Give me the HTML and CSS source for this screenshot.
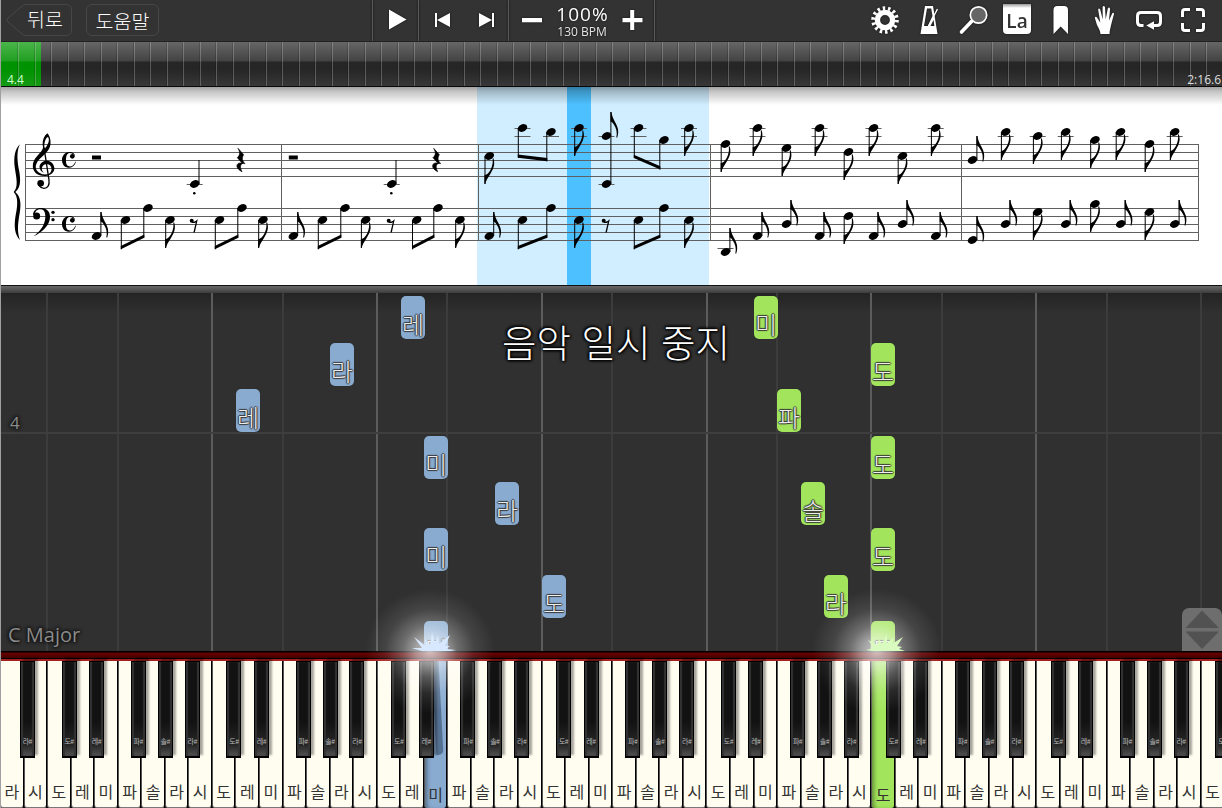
FILE: index.html
```html
<!DOCTYPE html>
<html lang="ko">
<head>
<meta charset="UTF-8">
<meta name="viewport" content="width=device-width, initial-scale=1.0">
<title>Piano</title>
<link rel="stylesheet" href="styles.css">
</head>
<body>
<div class="app">
  <!-- Toolbar -->
  <header class="toolbar">
    <div class="nav">
      <button class="back">
        <svg class="back-shape" width="66" height="32" viewBox="0 0 66 32"><path d="M20 .5H60Q65.500 .5 65.500 6V26Q65.500 31.500 60 31.500H20Q17 31.500 15 29L2 18Q0 16 2 14L15 3Q17 .5 20 .5Z"/></svg>
        <span>뒤로</span>
      </button>
      <button class="help">도움말</button>
    </div>
    <div class="transport">
      <button class="play"><svg width="46" height="41"><path d="M16 9.500L33.500 19.500L16 29.500Z"/></svg></button>
      <div class="skip">
        <button><svg width="45" height="41"><path d="M16 13H18V27H16ZM31 13V27L18 20Z"/></svg></button>
        <button><svg width="44" height="41"><path d="M15 13L28 20L15 27ZM28 13H30V27H28Z"/></svg></button>
      </div>
      <div class="tempo">
        <button><svg width="46" height="41"><path d="M13 18H33V22.300H13Z"/></svg></button>
        <div class="speed"><span class="percent">100%</span><span class="bpm">130 BPM</span></div>
        <button><svg width="45" height="41"><path d="M21.200 10H25.200V18H33.500V22.200H25.200V30H21.200V22.200H13.500V18H21.200Z"/></svg></button>
      </div>
    </div>
    <div class="tools">
      <button><svg width="44" height="41" viewBox="0 0 44 41"><circle cx="22" cy="20" r="7.600" fill="none" stroke="#fff" stroke-width="5.400"/><circle cx="22" cy="20" r="11.800" fill="none" stroke="#fff" stroke-width="4" stroke-dasharray="2.500 2.796"/></svg></button>
      <button><svg width="44" height="41" viewBox="0 0 44 41"><path fill-rule="evenodd" d="M18 6H26L30.500 34H13.500ZM20 8.500L17 26H21L25.500 16L24.200 8.500ZM26.500 20L23.500 26H27.400Z"/><path d="M21.500 26L30.500 9" fill="none" stroke="#fff" stroke-width="1.400"/></svg></button>
      <button><svg width="44" height="41" viewBox="0 0 44 41"><path d="M20.500 21.500L10.500 32" stroke="#fff" stroke-width="3.600" stroke-linecap="round"/><circle cx="27.500" cy="15" r="8.200" fill="#666" stroke="#fff" stroke-width="1.700"/></svg></button>
      <button><span class="la">La</span></button>
      <button><svg width="44" height="41" viewBox="0 0 44 41"><path d="M14.500 34V10Q14.500 6 18.500 6H25Q29 6 29 10V34L21.700 26.500Z"/></svg></button>
      <button><svg width="44" height="41" viewBox="0 0 44 41"><path d="M17.500 34C17 29 14.500 27 13.500 23.500L11.800 17.800Q12.500 15.800 14 17.500L17.300 22.500L15.200 10Q15.500 7.500 17.200 9.500L19.700 19.500L19.600 7Q20.700 5 22 7L22.700 19.300L24.800 8.500Q26.200 6.500 27.100 8.700L26 20.500L29.300 13.200Q31 12 31 14L28.200 24.500C27.500 28 26.600 30.500 26.500 34Z"/></svg></button>
      <button><svg width="44" height="41" viewBox="0 0 44 41"><path d="M16.500 25.500H14Q10.500 25.500 10.500 22V16Q10.500 12.500 14 12.500H30Q33.500 12.500 33.500 16V22Q33.500 25.500 30 25.500H27" fill="none" stroke="#fff" stroke-width="3"/><path d="M19.300 25.500L27 21.300V29.700Z"/></svg></button>
      <button><svg width="44" height="41" viewBox="0 0 44 41"><path d="M11.500 17V12Q11.500 9.500 14 9.500H19M25 9.500H30Q32.500 9.500 32.500 12V17M32.500 23V28Q32.500 30.500 30 30.500H25M19 30.500H14Q11.500 30.500 11.500 28V23" fill="none" stroke="#fff" stroke-width="3"/></svg></button>
    </div>
  </header>

  <!-- Song position -->
  <div class="timeline">
    <div class="played"></div>
    <div class="bars" id="bars"></div>
    <span class="elapsed">4.4</span>
    <span class="duration">2:16.6</span>
  </div>

  <!-- Sheet music -->
  <div class="sheet">
    <svg id="score" width="1221" height="198" viewBox="1 87 1221 198"></svg>
  </div>
  <div class="splitter"></div>

  <!-- Falling notes -->
  <main class="roll" id="roll">
    <div class="bar-line"></div>
    <span class="bar-number">4</span>
    <span class="key-name">C Major</span>
    <div class="message">음악 일시 중지</div>
    <div class="scroller">
      <svg width="40" height="43"><path d="M20 2.500L37 20H3.500Z"/><path d="M3.500 23.500H37L20 41Z"/></svg>
    </div>
  </main>
  <div class="felt"></div>

  <!-- Keyboard -->
  <div class="keyboard" id="keyboard"></div>

  <div class="glow glow-left"></div>
  <div class="glow glow-right"></div>
  <svg class="spark spark-left" width="52" height="20" viewBox="0 0 52 20"><path d="M13 20L3 17L13 17L5 6L17 15L16 8L21 14L23 1L26 12L29 4L30 13L41 4L36 15L41 15L37 18L47 19L42 20Z"/></svg>
  <svg class="spark spark-right" width="52" height="20" viewBox="0 0 52 20"><path d="M13 20L6 19L14 17L8 9L17 14L19 8L22 13L27 2L27 12L34 6L32 13L43 6L37 15L42 16L39 18L45 20Z"/></svg>
</div>
<script src="script.js"></script>
</body>
</html>
```
FILE: styles.css
```css
* {
  box-sizing: border-box;
}
body {
  margin: 0;
  background: #333;
  font-family: "Open Sans", "Noto Sans CJK KR", sans-serif;
  overflow: hidden;
}
button {
  padding: 0;
  border: 0;
  background: none;
  color: #fff;
  font: inherit;
}
svg {
  display: block;
}
.app {
  position: relative;
  width: 1222px;
  height: 808px;
  display: flex;
  flex-direction: column;
  overflow: hidden;
  border-left: 1px solid #a0a0a0;
}

/* toolbar */
.toolbar {
  height: 42px;
  margin-left: -1px;
  display: flex;
  background: #333;
  border-bottom: 1px solid #222;
  fill: #fff;
}
.nav {
  width: 372px;
  display: flex;
  gap: 14px;
  padding: 4px 0 0 6px;
  font-family: "Noto Sans CJK KR", sans-serif;
  font-weight: 300;
  font-size: 19.500px;
}
.back, .help {
  height: 32px;
  line-height: 29px;
}
.back {
  width: 66px;
  display: grid;
}
.back > * {
  grid-area: 1 / 1;
}
.back span {
  padding-left: 12px;
}
.back-shape path {
  fill: none;
  stroke: #474747;
}
.help {
  width: 73px;
  border: 1px solid #474747;
  border-radius: 6px;
}
.transport, .skip, .tempo, .tools {
  display: flex;
}
.transport > * {
  border-left: 1px solid #585858;
}
.transport {
  width: 283px;
  border-right: 1px solid #585858;
  filter: drop-shadow(0 0 1px #111);
}
.play {
  width: 46px;
}
.skip {
  width: 90px;
}
.speed {
  width: 54px;
  display: flex;
  flex-direction: column;
  align-items: center;
  color: #fff;
  padding-top: 2px;
}
.percent {
  font-size: 19px;
  line-height: 25px;
  letter-spacing: 1px;
  margin-right: -1px;
}
.bpm {
  font-size: 12px;
  line-height: 10px;
  white-space: nowrap;
  color: #e4e4e4;
}
.tools {
  margin-left: 208px;
  filter: drop-shadow(0 0 1px #111);
}
.tools button {
  width: 44px;
  display: flex;
  justify-content: center;
}
.la {
  width: 28px;
  height: 30px;
  margin-top: 4px;
  padding-top: 4px;
  border-radius: 0 0 4px 4px;
  background: linear-gradient(#999, #fff 4px);
  color: #333;
  font-weight: 600;
  font-size: 19px;
  line-height: 26px;
}

/* timeline */
.timeline {
  position: relative;
  height: 45px;
  border-bottom: 1px solid #080808;
  background: linear-gradient(#666, #434343 19px, #262626 20px, #262626 28px, #383838 44px);
  color: #ddd;
  font-size: 12px;
  overflow: hidden;
}
.played {
  position: absolute;
  inset: 0 auto 0 0;
  width: 40px;
  background: linear-gradient(#4ab54a, #219f21 19px, #009200 20px, #009200 28px, #149a14 44px);
}
.bars {
  position: relative;
  display: flex;
  height: 44px;
  padding-left: 1.800px;
}
.bar {
  flex: none;
  width: 16.515px;
  border-right: 1px solid rgba(200, 200, 200, .32);
  box-shadow: inset -1px 0 rgba(0, 0, 0, .15);
}
.elapsed, .duration {
  position: absolute;
  bottom: -2px;
}
.elapsed {
  left: 6px;
  color: #cfc;
}
.duration {
  right: 1px;
}

/* sheet */
.sheet {
  position: relative;
  height: 198px;
  background: #fff;
}
.sheet::after {
  content: "";
  position: absolute;
  inset: 0 0 auto 0;
  height: 18px;
  background: linear-gradient(rgba(0, 0, 0, .36), rgba(0, 0, 0, .22) 5px, transparent);
}
.measure-now {
  fill: #d0eeff;
}
.beat-now {
  fill: #4dc1ff;
}
.staff {
  stroke: #606060;
}
.stem {
  stroke: #000;
}
.splitter {
  height: 8px;
  border-top: 1px solid #111;
  background: linear-gradient(#686868, #3d3d3d);
}

/* falling notes */
.roll {
  position: relative;
  height: 358px;
  overflow: hidden;
  background: linear-gradient(#242424, #303030 20px);
}
.guide {
  position: absolute;
  top: 0;
  bottom: 0;
  width: 2px;
  background: #3c3c3c;
}
.guide.strong {
  background: #5c5c5c;
}
.bar-line {
  position: absolute;
  top: 139px;
  width: 100%;
  height: 2px;
  background: #3e3e3e;
}
.bar-number, .key-name {
  position: absolute;
  color: #8b8b8b;
  text-shadow: 0 0 3px #111, 0 0 3px #111, 0 0 4px #111;
}
.bar-number {
  left: 9px;
  top: 118px;
  font-size: 17px;
}
.key-name {
  left: 7px;
  top: 328px;
  font-size: 20px;
  line-height: 28px;
}
.note {
  position: absolute;
  z-index: 1;
  width: 24px;
  height: 43px;
  border-radius: 5px;
  box-shadow: 0 0 1px #222;
  overflow: hidden;
  text-align: center;
  font-family: "Noto Sans CJK KR", sans-serif;
  font-weight: 300;
  font-size: 24px;
  line-height: 36px;
  padding-top: 10px;
  color: #eee;
  text-shadow: 1px 0 1px #333, -1px 0 1px #333, 0 1px 1px #333, 0 -1px 1px #333;
}
.note.left {
  background: #89abd0;
}
.note.right {
  background: #a2e55c;
}
.message {
  position: absolute;
  z-index: 2;
  left: 501px;
  top: 21px;
  color: #fff;
  font-family: "Noto Sans CJK KR", sans-serif;
  font-weight: 300;
  font-size: 37.500px;
  line-height: 54px;
  white-space: nowrap;
  text-shadow: 0 0 3px #000, 0 0 3px #000, 1px 1px 3px #000, -1px -1px 3px #000;
}
.scroller {
  position: absolute;
  right: 0;
  bottom: 0;
  width: 40px;
  height: 43px;
  border-radius: 7px 7px 0 0;
  background: #6e6e6e;
  fill: #525252;
}

/* keyboard */
.felt {
  height: 10px;
  background: linear-gradient(#000 1px, #680000 2px, #440000 7px, #000 7px, #000 8px, #a52020 8px);
}
.keyboard {
  height: 147px;
  margin-left: -1px;
  display: flex;
  background: #000;
}
.white {
  position: relative;
  flex: none;
  width: 23.550px;
  border-right: 1px solid #000;
  border-left: 1px solid #555;
  border-bottom: 1px solid #777;
  border-radius: 0 0 3px 3px;
  background: #fffdf0;
  color: #333;
  font-family: "Noto Sans CJK KR", sans-serif;
  font-size: 16px;
  line-height: 22px;
  padding-top: 119px;
  text-align: center;
}
.white.left, .white.right {
  padding-top: 122px;
  border-bottom: 0;
  box-shadow: inset 4px 0 4px -2px rgba(0, 0, 0, .4);
}
.white.left {
  background: #89abd0;
}
.white.right {
  background: #a2e55c;
}
.black {
  position: absolute;
  z-index: 1;
  top: 0;
  left: 13px;
  width: 15px;
  height: 97px;
  padding-top: 74px;
  border: 1px solid #000;
  border-bottom-width: 2px;
  box-shadow: inset 2px 0 1px #333, inset -2px 0 1px #333, 3px -3px 2px rgba(0, 0, 0, .35);
  background: linear-gradient(#121212 60px, #252525 80px, #222 82px, #4a4a4a 92px);
  color: #bbb;
  font-size: 7px;
  line-height: 10px;
  letter-spacing: -.5px;
  white-space: nowrap;
}
.black.c { left: 13.500px; }
.black.d { left: 17.400px; }
.black.f { left: 12px; }
.black.g { left: 15.400px; }
.black.a { left: 18.800px; }
.white.left::after {
  content: "";
  position: absolute;
  left: 9px;
  top: 0;
  width: 7px;
  height: 94px;
  background: rgba(50, 75, 105, .6);
  border-radius: 0 0 5px 0;
  transform: skewX(3deg);
}

/* light on the notes being played */
.glow {
  position: absolute;
  z-index: 3;
  top: 589px;
  width: 130px;
  height: 124px;
  background: radial-gradient(closest-side, rgba(255, 255, 255, .75), rgba(255, 255, 255, .55) 22%, rgba(255, 255, 255, .3) 42%, rgba(255, 255, 255, .1) 68%, transparent);
}
.glow-left { left: 364px; }
.glow-right { left: 811px; }
.spark {
  position: absolute;
  z-index: 4;
  top: 631px;
}
.spark-left {
  left: 408px;
  fill: #d8e9ff;
}
.spark-right {
  left: 859px;
  fill: #d9fbc0;
}
```
FILE: script.js
```js
// timeline
const bars = document.getElementById('bars');
for (let i = 0; i < 75; i++) {
  bars.innerHTML += '<div class="bar"></div>';
}

// falling notes: hand, label, left, top
const notes = [
  ['left', '레', 400, 3], ['left', '라', 329, 50], ['left', '레', 235, 96], ['left', '미', 423, 143],
  ['left', '라', 494, 189], ['left', '미', 423, 235], ['left', '도', 541, 282], ['left', '미', 423, 328],
  ['right', '미', 753, 3], ['right', '도', 870, 50], ['right', '파', 776, 96], ['right', '도', 870, 143],
  ['right', '솔', 800, 189], ['right', '도', 870, 235], ['right', '라', 823, 282], ['right', '도', 870, 328]
];
const roll = document.getElementById('roll');
let html = '';
for (let i = 0; i < 8; i++) {
  const x = 45.1 + i * 164.86;
  const strong = i > 0 && i < 7 ? ' strong' : '';
  html += `<div class="guide${strong}" style="left:${x}px"></div>`;
  html += `<div class="guide" style="left:${x + 70.65}px"></div>`;
}
notes.forEach(([hand, label, x, y]) => {
  html += `<div class="note ${hand}" style="left:${x}px;top:${y}px">${label}</div>`;
});
roll.insertAdjacentHTML('afterbegin', html);

// keyboard
const names = ['도', '레', '미', '파', '솔', '라', '시'];
const sharps = ['c', 'd', '', 'f', 'g', 'a', ''];
const pressed = { 18: 'left', 37: 'right' };
html = '';
for (let i = 0; i < 53; i++) {
  const n = (i + 5) % 7;
  html += `<div class="white ${pressed[i] || ''}">${names[n]}`;
  if (sharps[n]) html += `<span class="black ${sharps[n]}">${names[n]}#</span>`;
  html += '</div>';
}
document.getElementById('keyboard').innerHTML = html;

// score
const head = (x, y) => `<ellipse cx="${x}" cy="${y}" rx="5" ry="3.6" transform="rotate(-25 ${x} ${y})"/>`;
const line = (x1, y1, x2, y2, cls) => `<path class="${cls}" d="M${x1} ${y1}L${x2} ${y2}"/>`;

function ledgers(x, y) {
  let s = '';
  if (y <= 136) s += line(x - 8, 136.5, x + 8, 136.5, 'staff');
  if (y <= 128) s += line(x - 8, 128.5, x + 8, 128.5, 'staff');
  if (y === 184) s += line(x - 8, 184.5, x + 8, 184.5, 'staff');
  if (y === 252) s += line(x - 8, 248.5, x + 8, 248.5, 'staff');
  return s;
}
function up(x, y, low = y) {
  return ledgers(x, y) + head(x, y) + line(x + 4.4, low, x + 4.4, y - 24, 'stem') +
    `<path transform="translate(${x} ${y})" d="M4 -24H5C5.500 -17 11 -12 11.600 -6C12 -2 11 0 10.800 1.500H9.800C11 -3 10 -8 7 -12C6 -13.500 5 -14.500 4 -14.500Z"/>`;
}
function down(x, y) {
  return ledgers(x, y) + head(x, y) + line(x - 4.3, y, x - 4.3, y + 28, 'stem') +
    `<path transform="translate(${x} ${y})" d="M-4.800 28H-4C-3 22 4.600 15 4.900 8C5 5 4.500 3.500 4 2L3.300 3C4 8 2 14 -1 17C-2.500 18.500 -3.500 19 -4.800 19Z"/>`;
}
function beam(x1, y1, x2, y2, b1, b2) {
  const a = x1 - 4.2, b = x2 - 4.2;
  return ledgers(x1, y1) + ledgers(x2, y2) + head(x1, y1) + head(x2, y2) +
    line(a, y1, a, b1, 'stem') + line(b, y2, b, b2, 'stem') +
    `<path d="M${a - .5} ${b1 - 3.2}L${b + .5} ${b2 - 3.2}V${b2}L${a - .5} ${b1}Z"/>`;
}
const rest8 = x => `<g transform="translate(${x} 225)"><circle cx="-2.300" cy="-4.300" r="2"/><path d="M-2 -3.300C1 -2.800 3 -5 3.800 -6L.8 7.500H-.6L1.800 -2.800C.5 -1.600 -1 -1.800 -2 -2.300Z"/></g>`;
const rest4 = x => `<path transform="translate(${x - 241} 120) scale(.3333)" stroke="#000" stroke-width="2" d="M714 85L731 104C724 114 727 122 735 131C723 127 717 138 726 155C712 148 707 138 714 131C718 128 724 129 727 130L712 113C722 104 720 96 714 85Z"/>`;
const common = y => `<g transform="translate(0 ${y}) scale(.3333)"><path d="M228 125C224 137 216 143 206 143C194 143 186 133 186 120C186 106 196 96 209 96C219 96 225 102 225 109L220 103C212 97 205 98 201 104C197 110 197 130 201 135C208 143 221 140 226 125Z"/><circle cx="217" cy="109" r="7"/></g>`;

let s = '<rect class="measure-now" x="477" y="87" width="232" height="198"/><rect class="beat-now" x="567" y="87" width="24" height="198"/>';
[144.5, 208.5].forEach(top => {
  for (let i = 0; i < 5; i++) s += line(25, top + i * 8, 1199, top + i * 8, 'staff');
});
[25.5, 281.5, 478.5, 710.5, 961.5, 1198.5].forEach(x => s += line(x, 144, x, 241, 'staff'));

// brace, clefs and time signature
s += `<g transform="translate(0 120) scale(.3333)">
  <path d="M60 73C44 88 41 112 44 140C48 170 57 200 41 216C57 232 52 262 46 292C42 320 44 345 60 360C52 340 53 318 57 292C63 262 66 232 46 216C66 200 61 168 55 140C51 112 51 90 60 73Z"/>
  <path fill-rule="evenodd" d="M142 40C134 46 125 60 129 82C128 92 120 98 110 110C98 122 97 138 100 148C105 163 120 169 136 168C154 166 164 156 163 143C161 128 149 121 138 122C124 124 117 134 119 144C121 153 127 157 132 158C124 152 124 143 129 137C134 132 145 131 151 137C157 144 156 156 147 161C134 167 116 161 109 149C104 138 111 124 121 115C133 104 147 94 151 76C154 60 148 46 142 40ZM143 51C147 53 148 61 145 68C142 76 138 82 134 86C131 74 135 56 143 51Z"/>
  <path d="M132 82L147 180C149 196 143 205 132 205C126 205 121 202 117 197" fill="none" stroke="#000" stroke-width="4"/>
  <circle cx="122" cy="190" r="10"/>
  <circle cx="110" cy="288" r="10.500"/>
  <path d="M99 285C99 270 112 263 125 264C143 265 151 278 150 293C148 318 125 338 100 349C118 336 134 318 136 293C137 278 132 268 122 268C112 268 105 274 105 281Z"/>
  <circle cx="159" cy="277" r="5"/><circle cx="159" cy="299" r="5"/>
</g>`;
s += common(120) + common(184);

// measures 1 and 2 share the same figure
[[96.5, 125.5, 148, 170, 194, 219.5, 242, 263, 241], [293.3, 322.5, 345, 365.7, 391, 416.7, 438, 460, 436.7]].forEach(m => {
  s += `<rect x="${m[0] - 4.5}" y="155.500" width="9" height="4"/>`;
  s += ledgers(m[4] + .7, 184) + head(m[4] + .7, 184) + line(m[4] + 5, 184, m[4] + 5, 160, 'stem');
  s += `<circle cx="${m[4] + .3}" cy="193.200" r="1.300"/>` + rest4(m[8]);
  s += up(m[0], 236) + beam(m[1], 220, m[2], 208, 249.3, 237.8) + down(m[3], 220) + rest8(m[4]);
  s += beam(m[5], 220, m[6], 208, 249.3, 237.8) + down(m[7], 220);
});

// measure 3
s += down(489.3, 156) + beam(522.5, 128, 551, 132, 157.7, 161.3) + down(579, 128);
s += up(606.5, 136, 184) + ledgers(606.5, 184) + head(606.5, 184);
s += beam(638.5, 128, 664, 140, 158, 169.5) + down(689, 128);
s += up(489.3, 236) + beam(522.5, 220, 551, 208, 249.3, 237.7) + down(579, 220) + rest8(606);
s += beam(638.5, 220, 664, 208, 249.3, 237.7) + down(689, 220);

// measures 4 and 5
[[725.5, 144], [757.5, 128], [786.5, 148], [819.5, 128], [848.5, 152], [873.5, 128], [902.5, 156], [935.7, 128],
 [1005.7, 132], [1037.7, 136], [1065.7, 132], [1095, 140], [1120.5, 132], [1149.5, 144], [1174.7, 132],
 [848.5, 216], [1037.7, 212], [1095, 204], [1149.5, 212]].forEach(n => s += down(n[0], n[1]));
[[725.5, 252], [757.5, 236], [786.5, 224], [819.5, 236], [873.5, 236], [902.5, 224], [935.7, 236],
 [972.5, 160], [972.5, 240], [1005.5, 224], [1065.7, 224], [1120.7, 224], [1174.7, 224]].forEach(n => s += up(n[0], n[1]));

document.getElementById('score').innerHTML = s;
```
